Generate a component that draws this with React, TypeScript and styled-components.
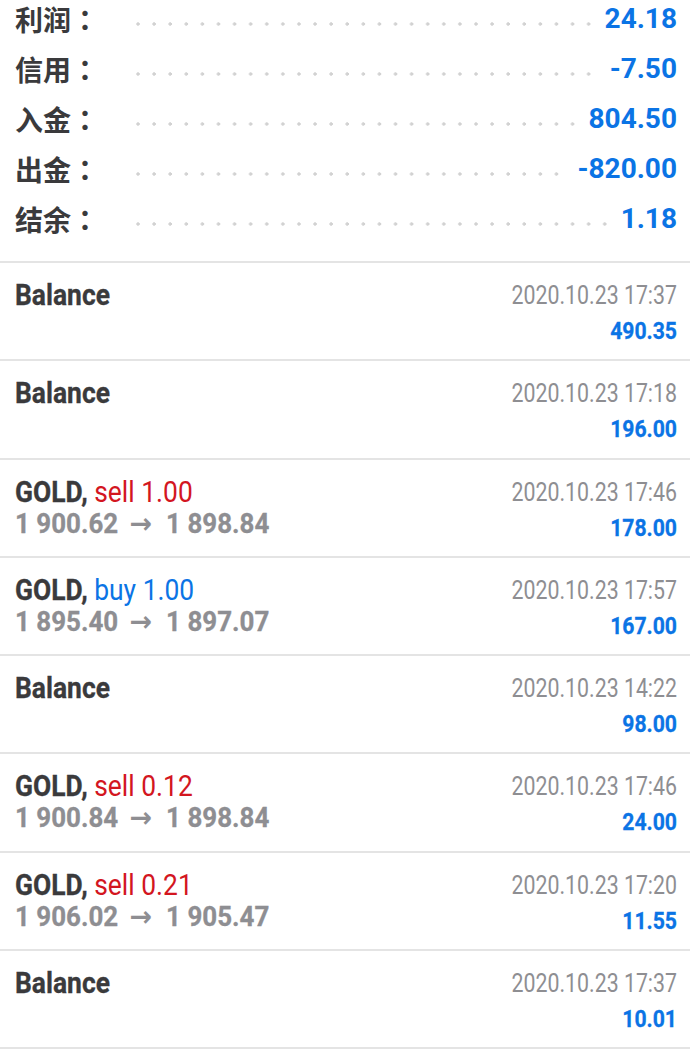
import React from "react";
import styled, { createGlobalStyle } from "styled-components";

const GlobalStyle = createGlobalStyle`
  html, body {
    margin: 0;
    padding: 0;
    background: #ffffff;
  }

  body {
    font-family: Roboto, "Noto Sans", sans-serif;
  }
`;

type SummaryItem = { label: string; value: string };

const summary: SummaryItem[] = [
  { label: "利润", value: "24.18" },
  { label: "信用", value: "-7.50" },
  { label: "入金", value: "804.50" },
  { label: "出金", value: "-820.00" },
  { label: "结余", value: "1.18" },
];

type Deal = {
  time: string;
  amount: string;
  // trades only
  side?: "sell" | "buy";
  volume?: string;
  open?: string;
  close?: string;
};

const deals: Deal[] = [
  { time: "2020.10.23 17:37", amount: "490.35" },
  { time: "2020.10.23 17:18", amount: "196.00" },
  {
    time: "2020.10.23 17:46",
    amount: "178.00",
    side: "sell",
    volume: "1.00",
    open: "1 900.62",
    close: "1 898.84",
  },
  {
    time: "2020.10.23 17:57",
    amount: "167.00",
    side: "buy",
    volume: "1.00",
    open: "1 895.40",
    close: "1 897.07",
  },
  { time: "2020.10.23 14:22", amount: "98.00" },
  {
    time: "2020.10.23 17:46",
    amount: "24.00",
    side: "sell",
    volume: "0.12",
    open: "1 900.84",
    close: "1 898.84",
  },
  {
    time: "2020.10.23 17:20",
    amount: "11.55",
    side: "sell",
    volume: "0.21",
    open: "1 906.02",
    close: "1 905.47",
  },
  { time: "2020.10.23 17:37", amount: "10.01" },
];

const App = () => {
  return (
    <>
      <GlobalStyle />
      <Page>
        <Summary>
          {summary.map((item) => (
            <SummaryRow key={item.label}>
              <SummaryLabel>
                {item.label}
                <Colon>：</Colon>
              </SummaryLabel>
              <Leader />
              <SummaryValue>{item.value}</SummaryValue>
            </SummaryRow>
          ))}
        </Summary>
        <DealList>
          {deals.map((deal, index) => (
            <DealRow key={index}>
              <DealMain>
                {deal.side ? (
                  <>
                    <Title>
                      GOLD,{" "}
                      <Action $side={deal.side}>
                        {deal.side} {deal.volume}
                      </Action>
                    </Title>
                    <Prices>
                      {deal.open} <Arrow>→</Arrow> {deal.close}
                    </Prices>
                  </>
                ) : (
                  <Title>Balance</Title>
                )}
              </DealMain>
              <DealSide>
                <Time>{deal.time}</Time>
                <Amount>{deal.amount}</Amount>
              </DealSide>
            </DealRow>
          ))}
        </DealList>
      </Page>
    </>
  );
};

export default App;

const BLUE = "#0b74e5";
const RED = "#d3161f";
const DARK = "#3a3a3c";
const GRAY = "#8e8e92";

const Page = styled.div`
  width: 690px;
  overflow: hidden;
`;

const Summary = styled.div`
  margin-top: -6px;
  padding: 0 13px 17px 15px;

  display: flex;
  flex-direction: column;
`;

const SummaryRow = styled.div`
  height: 50px;

  display: flex;
  align-items: center;
`;

const SummaryLabel = styled.div`
  flex: 0 0 121px;
  font-family: "Noto Sans CJK SC", sans-serif;
  font-size: 28px;
  font-weight: 700;
  line-height: 50px;
  color: ${DARK};
  white-space: nowrap;
`;

const Colon = styled.span`
  font-family: "Noto Sans CJK JP", sans-serif;
`;

const Leader = styled.div`
  flex: 1;
  align-self: stretch;
  margin-right: 14px;

  background-image: radial-gradient(
    circle at 2px 30px,
    #d2d2d2 1.4px,
    rgba(210, 210, 210, 0) 2px
  );
  background-size: 16.1px 100%;
  background-repeat: repeat-x;
`;

const SummaryValue = styled.div`
  font-family: Roboto, sans-serif;
  font-size: 28px;
  font-weight: 700;
  line-height: 50px;
  color: ${BLUE};
  white-space: nowrap;
`;

const DealList = styled.div`
  border-bottom: 2px solid #e4e4e4;
`;

const DealRow = styled.div`
  box-sizing: border-box;
  height: 98.25px;
  padding: 16px 13px 0 15px;
  border-top: 2px solid #e4e4e4;

  display: flex;
  justify-content: space-between;
  align-items: flex-start;
`;

const DealMain = styled.div`
  flex: 1;

  display: flex;
  flex-direction: column;
`;

const DealSide = styled.div`
  flex: 1;

  display: flex;
  flex-direction: column;
  align-items: stretch;
  text-align: right;
`;

const Title = styled.div`
  font-size: 30px;
  font-weight: 700;
  line-height: 32px;
  color: ${DARK};
  white-space: nowrap;
  -webkit-text-stroke: 0.35px currentColor;

  transform: scaleX(0.88);
  transform-origin: left center;
`;

const Action = styled.span<{ $side: "sell" | "buy" }>`
  font-weight: 400;
  -webkit-text-stroke: 0;
  color: ${({ $side }) => ($side === "sell" ? RED : BLUE)};
`;

const Prices = styled.div`
  font-size: 27px;
  font-weight: 700;
  line-height: 32px;
  color: ${GRAY};
  white-space: nowrap;
  -webkit-text-stroke: 0.3px currentColor;

  transform: scaleX(0.96);
  transform-origin: left center;
`;

const Arrow = styled.span`
  margin: 0 8px 0 5px;
  font-family: "DejaVu Sans", sans-serif;
  font-size: 28px;
  font-weight: 700;
  -webkit-text-stroke: 0;
`;

const Time = styled.div`
  font-size: 26px;
  font-weight: 400;
  line-height: 32px;
  color: ${GRAY};
  white-space: nowrap;

  transform: scaleX(0.82);
  transform-origin: right center;
`;

const Amount = styled.div`
  margin-top: 5px;
  font-size: 23px;
  font-weight: 700;
  line-height: 32px;
  color: ${BLUE};
  white-space: nowrap;
  -webkit-text-stroke: 0.3px currentColor;

  transform: scaleX(0.92);
  transform-origin: right center;
`;
